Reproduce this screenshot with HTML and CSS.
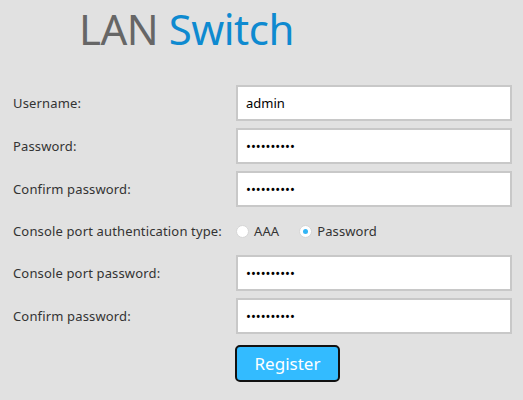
FILE: index.html
```html
<!DOCTYPE html>
<html lang="en">
<head>
    <meta charset="UTF-8">
    <title>LAN Switch</title>
    <link rel="stylesheet" href="styles.css">
</head>
<body>
    <div class="register-container">
        <h1 class="logo"><span class="logo-lan">LAN</span> <span class="logo-switch">Switch</span></h1>

        <form class="register-form">
            <label for="username">Username:</label>
            <input type="text" id="username" value="admin">

            <label for="password">Password:</label>
            <input type="password" id="password" value="1234567890">

            <label for="confirmPassword">Confirm password:</label>
            <input type="password" id="confirmPassword" value="1234567890">

            <label>Console port authentication type:</label>
            <div class="radio-group">
                <label class="radio"><input type="radio" name="authType" value="aaa"><span class="radio-mark"></span>AAA</label>
                <label class="radio"><input type="radio" name="authType" value="password" checked><span class="radio-mark"></span>Password</label>
            </div>

            <label for="consolePassword">Console port password:</label>
            <input type="password" id="consolePassword" value="1234567890">

            <label for="consoleConfirm">Confirm password:</label>
            <input type="password" id="consoleConfirm" value="1234567890">

            <div></div>
            <div class="actions">
                <button type="button" id="registerButton">Register</button>
            </div>
        </form>
    </div>
</body>
</html>
```

FILE: styles.css
```css
body {
    font-family: 'Noto Sans', 'Open Sans', sans-serif;
    margin: 0;
    background-color: #e1e1e1;
    color: #333;
}
.register-container {
    padding: 0 11px 0 13px;
}
.logo {
    margin: 0;
    padding: 1px 0 0 66px;
    height: 85px;
    box-sizing: border-box;
    font-weight: normal;
    font-size: 42px;
    line-height: 56px;
    letter-spacing: -0.5px;
}
.logo-lan {
    color: #666;
}
.logo-switch {
    color: #0e8ad0;
}
.register-form {
    display: grid;
    grid-template-columns: 223px 276px;
    row-gap: 7px;
    align-items: center;
    font-size: 13px;
}
.register-form > label {
    line-height: 16px;
    letter-spacing: 0.15px;
}
.register-form input[type="text"],
.register-form input[type="password"] {
    height: 36px;
    box-sizing: border-box;
    margin: 0;
    padding: 0 8px;
    border: 2px solid #c8c8c8;
    background: #fff;
    font-family: inherit;
    font-size: 13px;
    color: #000;
    outline: none;
}
.radio-group {
    display: flex;
    align-items: center;
    height: 34px;
    letter-spacing: 0.1px;
}
.radio {
    display: flex;
    align-items: center;
    margin-right: 20px;
    cursor: pointer;
}
.radio input {
    display: none;
}
.radio-mark {
    width: 13px;
    height: 13px;
    box-sizing: border-box;
    border: 1px solid #d6d6d6;
    border-radius: 50%;
    background: #fff;
    margin-right: 5px;
    position: relative;
}
.radio input:checked + .radio-mark::after {
    content: '';
    position: absolute;
    left: 3px;
    top: 3px;
    width: 5px;
    height: 5px;
    border-radius: 50%;
    background: #33b5f5;
}
.actions {
    padding-top: 4px;
}
#registerButton {
    width: 105px;
    height: 37px;
    margin-left: -1px;
    border: 2px solid #111;
    border-radius: 5px;
    background-color: #33bbff;
    color: #fff;
    font-family: inherit;
    font-size: 17px;
    cursor: pointer;
}
#registerButton:hover {
    background-color: #22aaee;
}
```
